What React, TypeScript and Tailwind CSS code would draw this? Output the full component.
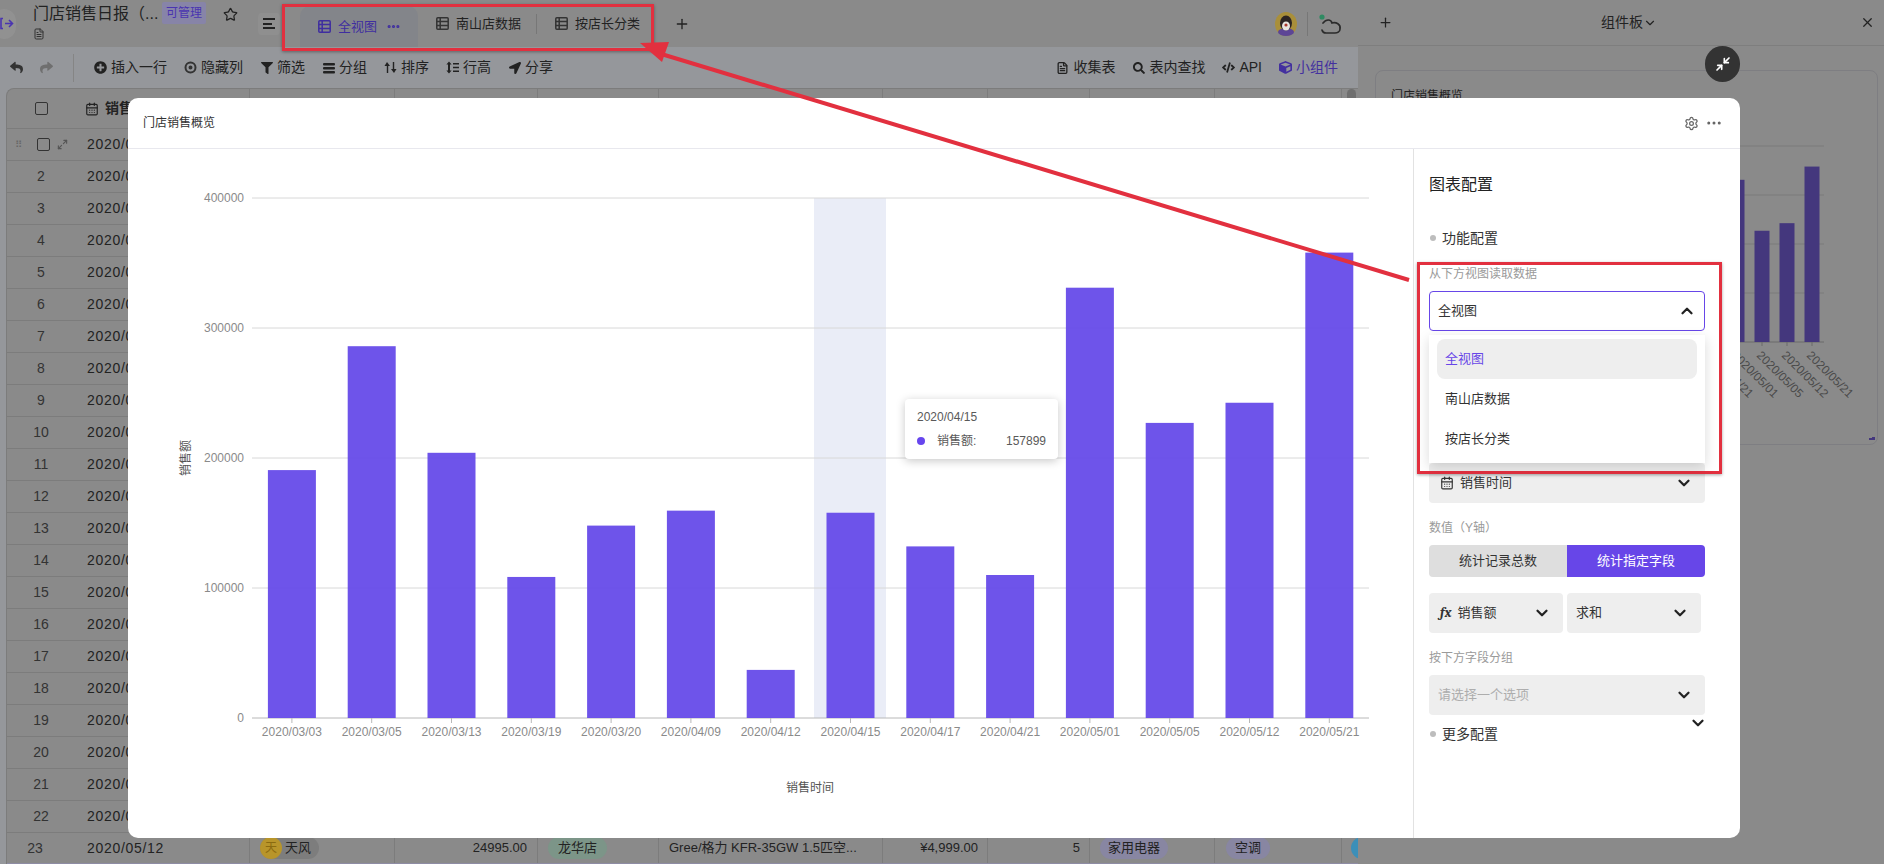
import { CalendarDays, ChevronDown, ChevronUp, FileText, Maximize2, Minimize2, MoreHorizontal, Plus, Settings, Star, X } from "lucide-react";
import { FaCode, FaCube, FaFilter, FaLocationArrow, FaPlusCircle, FaReply, FaSearch, FaShare } from "react-icons/fa";
import type { ReactNode } from "react";

const bars = [
  { date: "2020/03/03", value: 190700 },
  { date: "2020/03/05", value: 286000 },
  { date: "2020/03/13", value: 204000 },
  { date: "2020/03/19", value: 108500 },
  { date: "2020/03/20", value: 148000 },
  { date: "2020/04/09", value: 159500 },
  { date: "2020/04/12", value: 37000 },
  { date: "2020/04/15", value: 157899 },
  { date: "2020/04/17", value: 132000 },
  { date: "2020/04/21", value: 110000 },
  { date: "2020/05/01", value: 331000 },
  { date: "2020/05/05", value: 227000 },
  { date: "2020/05/12", value: 242500 },
  { date: "2020/05/21", value: 358000 },
];

const rowDates = [
  "2020/03/03", "2020/03/03", "2020/03/05", "2020/03/05", "2020/03/13", "2020/03/13", "2020/03/19", "2020/03/20",
  "2020/03/20", "2020/04/09", "2020/04/09", "2020/04/12", "2020/04/15", "2020/04/15", "2020/04/17", "2020/04/21",
  "2020/04/21", "2020/05/01", "2020/05/01", "2020/05/05", "2020/05/05", "2020/05/12",
];

const columnLines = [243, 145, 143, 121, 224, 105, 102, 125, 127];

const TableIcon = ({ color = "#333" }: { color?: string }) => (
  <svg width="13" height="13" viewBox="0 0 13 13" fill="none" stroke={color} strokeWidth="1.5">
    <rect x="0.8" y="0.8" width="11.4" height="11.4" rx="1" />
    <path d="M0.8 4.6H12.2M0.8 8.4H12.2M4.2 0.8V12.2" />
  </svg>
);

const ToolItem = ({ icon, label, color = "#222" }: { icon: ReactNode; label: string; color?: string }) => (
  <div className="flex items-center gap-[4px] text-[14px]" style={{ color }}>
    <span className="flex w-[13px] justify-center">{icon}</span>
    <span>{label}</span>
  </div>
);

const Select = ({ children, width = "w-[276px]" }: { children: ReactNode; width?: string }) => (
  <div className={`flex h-10 items-center justify-between rounded-[4px] bg-[#eeeeee] pl-[9px] pr-[12px] text-[13px] text-[#333] ${width}`}>
    <div className="flex items-center gap-[6px]">{children}</div>
    <ChevronDown size={18} strokeWidth={3} className="text-[#222]" />
  </div>
);

const Label = ({ children, className = "" }: { children: ReactNode; className?: string }) => (
  <div className={`h-4 text-[12px] leading-4 text-[#9a9a9a] ${className}`}>{children}</div>
);

const Section = ({ children, className = "" }: { children: ReactNode; className?: string }) => (
  <div className={`flex h-5 items-center gap-[6px] text-[14px] text-[#333] ${className}`}>
    <span className="ml-[1px] h-[6px] w-[6px] rounded-full bg-[#bdbdbd]" />
    {children}
  </div>
);

const TopBar = () => (
  <div className="flex h-[47px] items-center bg-[#8a8a8a] text-[#222]">
    <div className="-ml-[8px] flex h-[30px] w-[24px] shrink-0 items-center justify-end rounded-full bg-[#919191] pr-[2px]">
      <svg width="14" height="13" viewBox="0 0 14 13" fill="none" stroke="#4a34b0" strokeWidth="1.6">
        <path d="M3 1.5H1V11.5H3M5 6.5H12M9 3L12.5 6.5L9 10" />
      </svg>
    </div>
    <div className="ml-[17px] w-[129px] shrink-0 self-start">
      <div className="mt-[2px] text-[16px] leading-6">门店销售日报（...</div>
      <FileText size={12} className="mt-[2px] text-[#333]" />
    </div>
    <span className="-mt-[22px] flex h-[22px] w-[44px] shrink-0 items-center justify-center rounded-[2px] bg-[#8784a8] text-[12px] text-[#4a34b0]">可管理</span>
    <Star size={15} strokeWidth={2} className="-mt-[18px] ml-[17px] shrink-0" />
    <div className="ml-[20px] flex h-[22px] w-[22px] shrink-0 flex-col items-center justify-center gap-[2.5px] rounded-[4px] bg-[#8f8f8f]">
      <span className="h-[2px] w-[12px] bg-[#222]" />
      <span className="ml-[5px] h-[2px] w-[9px] self-start bg-[#222]" />
      <span className="h-[2px] w-[12px] bg-[#222]" />
    </div>
    <div className="ml-[20px] flex h-[41px] w-[118px] shrink-0 items-center self-end rounded-t-[10px] bg-[#83858a] pl-[18px] text-[13px] text-[#3f2ea0]">
      <TableIcon color="#3f2ea0" />
      <span className="ml-[7px]">全视图</span>
      <MoreHorizontal size={15} strokeWidth={3} className="ml-[9px]" />
    </div>
    <div className="flex w-[118px] shrink-0 items-center pl-[18px] text-[13px]">
      <TableIcon />
      <span className="ml-[7px]">南山店数据</span>
    </div>
    <div className="h-[20px] w-px shrink-0 bg-[#777]" />
    <div className="flex w-[122px] shrink-0 items-center pl-[18px] text-[13px]">
      <TableIcon />
      <span className="ml-[7px]">按店长分类</span>
    </div>
    <Plus size={16} strokeWidth={2} className="ml-[15px] shrink-0" />
    <div className="ml-auto mr-[14px] flex items-center">
      <svg width="22" height="24" viewBox="0 0 22 24">
        <ellipse cx="11" cy="12" rx="11" ry="12" fill="#a98f3a" />
        <ellipse cx="11" cy="20" rx="8" ry="4" fill="#5d4596" />
        <ellipse cx="11" cy="11" rx="6" ry="7.5" fill="#2c2422" />
        <ellipse cx="11" cy="14" rx="4" ry="4.5" fill="#e8e4df" />
        <circle cx="11" cy="13" r="1.6" fill="#a8382b" />
      </svg>
      <div className="mx-[10px] h-[24px] w-px bg-[#777]" />
      <svg width="26" height="26" viewBox="0 0 26 26" fill="none" stroke="#2b2b2b" strokeWidth="1.7" strokeLinecap="round">
        <circle cx="4" cy="6" r="2.6" fill="#2f8a62" stroke="none" />
        <path d="M5 12C8 8 13 8 14 12C18 11 23 13 22 18C22 21 19 22 17 22H8C6 22 4.5 21 4 19" />
      </svg>
    </div>
  </div>
);

const ToolBar = () => (
  <div className="flex h-[41px] items-center justify-between bg-[#95979b] pl-[10px] pr-[20px] text-[#222]">
    <div className="flex items-center">
      <FaReply size={13} className="text-[#333]" />
      <FaShare size={13} className="ml-[17px] text-[#6f6f6f]" />
      <div className="ml-[20px] mr-[20px] h-[28px] w-px bg-[#858585]" />
      <div className="flex items-center gap-[17px]">
        <ToolItem icon={<FaPlusCircle size={13} />} label="插入一行" />
        <ToolItem
          icon={
            <svg width="13" height="13" viewBox="0 0 13 13" fill="none" stroke="#333" strokeWidth="2">
              <circle cx="6.5" cy="6.5" r="5" />
              <circle cx="6.5" cy="6.5" r="1" />
            </svg>
          }
          label="隐藏列"
        />
        <ToolItem icon={<FaFilter size={12} />} label="筛选" />
        <ToolItem
          icon={
            <svg width="12" height="12" viewBox="0 0 12 12" fill="#222">
              <rect y="1" width="12" height="2.6" rx="1" />
              <rect y="5" width="12" height="2.6" rx="1" />
              <rect y="9" width="12" height="2.6" rx="1" />
            </svg>
          }
          label="分组"
        />
        <ToolItem
          icon={
            <svg width="13" height="13" viewBox="0 0 13 13" fill="#222">
              <path d="M3 1L6 5H4.2V12H2.8L2.8 5H0.5ZM8.8 1H10.2V8H12.5L10 12L7 8H8.8Z" />
            </svg>
          }
          label="排序"
        />
        <ToolItem
          icon={
            <svg width="13" height="13" viewBox="0 0 13 13" fill="#222">
              <path d="M3 0.5L5.6 3.5H4V9.5H5.6L3 12.5L0.4 9.5H2V3.5H0.4ZM7 2H13V3.6H7ZM7 5.7H13V7.3H7ZM7 9.4H13V11H7Z" />
            </svg>
          }
          label="行高"
        />
        <ToolItem icon={<FaLocationArrow size={12} />} label="分享" />
      </div>
    </div>
    <div className="flex items-center gap-[17px]">
      <ToolItem icon={<FileText size={14} strokeWidth={2.4} />} label="收集表" />
      <ToolItem icon={<FaSearch size={12} />} label="表内查找" />
      <ToolItem icon={<FaCode size={13} />} label="API" />
      <ToolItem icon={<FaCube size={13} />} label="小组件" color="#43309f" />
    </div>
  </div>
);

const Cell = ({ width, className = "", children }: { width: number; className?: string; children?: ReactNode }) => (
  <div className={`flex h-full shrink-0 items-center border-r border-[#7c7c7c] ${className}`} style={{ width }}>
    {children}
  </div>
);

const Table = () => (
  <div className="relative ml-[6px] flex-1 overflow-hidden rounded-tl-[8px] border-l border-t border-[#7c7c7c] bg-[#8a8a8a] text-[14px] text-[#222]">
    <div className="flex h-[40px] border-b border-[#7c7c7c]">
      <Cell width={columnLines[0]}>
        <span className="ml-[28px] h-[13px] w-[13px] rounded-[2px] border border-[#333]" />
        <CalendarDays size={14} className="ml-[37px]" />
        <span className="ml-[6px] font-bold">销售时间</span>
      </Cell>
      {columnLines.slice(1).map((w, i) => (
        <Cell key={i} width={w} />
      ))}
    </div>
    {rowDates.map((date, i) => (
      <div key={i} className="flex h-[32px] border-b border-[#7c7c7c]">
        <Cell width={columnLines[0]}>
          <div className="relative flex w-[80px] shrink-0 items-center justify-center">
            {i === 0 ? (
              <>
                <span className="absolute left-[8px] text-[10px] leading-none tracking-[1px] text-[#666]">⠿</span>
                <span className="ml-[-7px] h-[13px] w-[13px] rounded-[2px] border border-[#333]" />
                <Maximize2 size={11} strokeWidth={2.5} className="absolute left-[50px] text-[#555]" />
              </>
            ) : (
              <span className="-ml-[12px] text-[#333]">{i + 1}</span>
            )}
          </div>
          <span className="tracking-[0.7px]">{date}</span>
        </Cell>
        {columnLines.slice(1).map((w, j) => (
          <Cell key={j} width={w} />
        ))}
      </div>
    ))}
    <div className="flex h-[32px] border-b-2 border-[#8e8ca4]">
      <Cell width={columnLines[0]}>
        <span className="w-[68px] shrink-0 pr-[12px] text-center text-[#333]">23</span>
        <span className="ml-[12px] tracking-[0.7px]">2020/05/12</span>
      </Cell>
      <Cell width={columnLines[1]} className="pl-[10px]">
        <div className="flex h-[22px] items-center gap-[3px] rounded-full bg-[#7d7d7d] pr-[8px]">
          <span className="flex h-[22px] w-[22px] items-center justify-center rounded-full bg-[#b8952a] text-[12px] text-[#8a6a10]">天</span>
          <span className="text-[13px]">天风</span>
        </div>
      </Cell>
      <Cell width={columnLines[2]} className="justify-end pr-[10px] text-[13px]">24995.00</Cell>
      <Cell width={columnLines[3]} className="pl-[10px]">
        <span className="flex h-[22px] items-center rounded-full bg-[#7c9588] px-[10px] text-[13px]">龙华店</span>
      </Cell>
      <Cell width={columnLines[4]} className="pl-[10px] text-[13px]">Gree/格力 KFR-35GW 1.5匹空...</Cell>
      <Cell width={columnLines[5]} className="justify-end pr-[9px] text-[13px]">¥4,999.00</Cell>
      <Cell width={columnLines[6]} className="justify-end pr-[9px] text-[13px]">5</Cell>
      <Cell width={columnLines[7]} className="pl-[10px]">
        <span className="flex h-[22px] items-center rounded-full bg-[#8886a2] px-[8px] text-[13px]">家用电器</span>
      </Cell>
      <Cell width={columnLines[8]} className="pl-[11px]">
        <span className="flex h-[22px] items-center rounded-full bg-[#8886a2] px-[9px] text-[13px]">空调</span>
      </Cell>
      <div className="ml-[9px] h-[22px] w-[22px] shrink-0 self-center rounded-full bg-[#3c8fb8]" />
    </div>
    {/* scrollbar thumb */}
    <div className="absolute right-[2px] top-0 h-[30px] w-[9px] rounded-full bg-[#6f6f6f]" />
  </div>
);

// the small copy of the chart that peeks out behind the modal
const MiniChart = () => (
  <svg width="501" height="373" viewBox="1376 71 501 373" className="absolute left-0 top-0">
    {[146, 195, 244, 293].map((y) => (
      <line key={y} x1="1475" x2="1824" y1={y} y2={y} stroke="#7b7b7b" />
    ))}
    <line x1="1475" x2="1824" y1="342" y2="342" stroke="#6a6a6a" />
    {bars.map((b, i) => {
      const cx = 1487 + i * 25;
      const h = (b.value / 100000) * 49;
      return (
        <g key={b.date}>
          <rect x={cx - 7.5} y={342 - h} width="15" height={h} fill="#44377d" />
          <line x1={cx} x2={cx} y1="342" y2="346" stroke="#6a6a6a" />
          <text x={cx - 6} y="356" fontSize="12" fill="#4a4a4a" transform={`rotate(45 ${cx - 6} 356)`}>{b.date}</text>
        </g>
      );
    })}
    <path d="M1872 437H1875V440H1869V438H1872Z" fill="#44377d" />
  </svg>
);

const RightPanel = () => (
  <div className="flex flex-1 flex-col bg-[#8a8a8a] text-[#222]">
    <div className="relative flex h-[46px] shrink-0 items-center justify-center border-b border-[#7e7e7e] text-[14px]">
      <Plus size={15} className="absolute left-[20px]" />
      <span className="ml-[16px]">组件板</span>
      <ChevronDown size={14} />
      <X size={15} className="absolute right-[9px]" />
    </div>
    <div className="relative ml-[17px] mt-[24px] h-[375px] w-[503px] rounded-[8px] border border-[#7e7e82]">
      <div className="ml-[15px] mt-[16px] text-[12px] text-[#222]">门店销售概览</div>
      <MiniChart />
    </div>
  </div>
);

const Chart = () => (
  <svg width="1285" height="689" viewBox="128 149 1285 689" className="absolute left-0 top-0">
    <rect x="814" y="198" width="72" height="520" fill="#eaedf7" />
    {[0, 100000, 200000, 300000, 400000].map((v, i) => {
      const y = 718 - i * 130;
      return (
        <g key={v}>
          <line x1="252" x2="1369" y1={y} y2={y} stroke={i === 0 ? "#b8b8b8" : "#d8d8d8"} />
          <text x="244" y={y + 4} fontSize="12" fill="#8a8a8a" textAnchor="end">{v}</text>
        </g>
      );
    })}
    {bars.map((b, i) => {
      const cx = 252 + 79.8 * (i + 0.5);
      const h = (b.value / 100000) * 130;
      return (
        <g key={b.date}>
          <rect x={cx - 24} y={718 - h} width="48" height={h} fill="#6347e8" fillOpacity="0.93" />
          <line x1={cx} x2={cx} y1="718" y2="723" stroke="#b8b8b8" />
          <text x={cx} y="736" fontSize="12" fill="#8a8a8a" textAnchor="middle">{b.date}</text>
        </g>
      );
    })}
    <text x="810" y="792" fontSize="12" fill="#555" textAnchor="middle">销售时间</text>
    <text x="190" y="458" fontSize="12" fill="#555" textAnchor="middle" transform="rotate(-90 190 458)">销售额</text>
  </svg>
);

const ConfigPanel = () => (
  <div className="relative w-[327px] shrink-0 border-l border-[#e2e2e2] pl-[15px] pt-[24px]">
    <div className="h-6 text-[16px] leading-6 text-[#222]">图表配置</div>
    <Section className="mt-[31px]">功能配置</Section>
    <Label className="mt-[18px]">从下方视图读取数据</Label>
    <div className="relative mt-[9px] h-10 w-[276px]">
      <div className="flex h-10 items-center justify-between rounded-[4px] border border-[#6746e8] pl-[8px] pr-[8px] text-[13px] text-[#333]">
        全视图
        <ChevronUp size={18} strokeWidth={3} className="text-[#222]" />
      </div>
      <div className="absolute left-0 top-[44px] z-10 h-[128px] w-[276px] bg-white p-[4px_8px] text-[13px] text-[#333] shadow-[0_4px_12px_rgba(0,0,0,0.15)]">
        <div className="flex h-10 items-center rounded-[8px] bg-[#eeeeee] px-[8px] text-[#6746e8]">全视图</div>
        <div className="flex h-10 items-center px-[8px]">南山店数据</div>
        <div className="flex h-10 items-center px-[8px]">按店长分类</div>
      </div>
    </div>
    <div className="mt-[132px]">
      <Select>
        <CalendarDays size={14} className="ml-[2px]" />
        销售时间
      </Select>
    </div>
    <Label className="mt-[17px]">数值（Y轴）</Label>
    <div className="mt-[9px] flex h-8 w-[276px] overflow-hidden rounded-[4px] text-[13px]">
      <div className="flex flex-1 items-center justify-center bg-[#dedede] text-[#333]">统计记录总数</div>
      <div className="flex flex-1 items-center justify-center bg-[#6746e8] text-white">统计指定字段</div>
    </div>
    <div className="mt-[16px] flex w-[276px] gap-[4px]">
      <Select width="w-[134px]">
        <span className="ml-[2px] font-serif text-[14px] font-bold italic leading-none">fx</span>
        销售额
      </Select>
      <Select width="w-[134px]">求和</Select>
    </div>
    <Label className="mt-[17px]">按下方字段分组</Label>
    <div className="mt-[9px]">
      <Select>
        <span className="text-[#adadad]">请选择一个选项</span>
      </Select>
    </div>
    <ChevronDown size={18} strokeWidth={3} className="absolute left-[275px] top-[565px] text-[#222]" />
    <Section className="mt-[9px]">更多配置</Section>
  </div>
);

const Modal = () => (
  <div className="absolute left-[128px] top-[98px] flex h-[740px] w-[1612px] flex-col overflow-hidden rounded-[10px] bg-white">
    <div className="flex h-[51px] shrink-0 items-center justify-between border-b border-[#e8e8ee] pl-[15px] pr-[17px]">
      <span className="text-[12px] text-[#333]">门店销售概览</span>
      <div className="flex items-center gap-[6px] text-[#666]">
        <Settings size={15} />
        <MoreHorizontal size={18} />
      </div>
    </div>
    <div className="flex flex-1">
      <div className="relative flex-1">
        <Chart />
        <div className="absolute left-[777px] top-[250px] h-[60px] w-[153px] rounded-[4px] bg-white px-[12px] pt-[10px] text-[12px] leading-[16px] text-[#595959] shadow-[0_2px_10px_rgba(0,0,0,0.22)]">
          <div>2020/04/15</div>
          <div className="mt-[8px] flex items-center">
            <span className="h-2 w-2 rounded-full bg-[#6746ee]" />
            <span className="ml-[12px]">销售额:</span>
            <span className="ml-auto">157899</span>
          </div>
        </div>
      </div>
      <ConfigPanel />
    </div>
  </div>
);

const Annotations = () => (
  <>
    <div className="absolute left-[282px] top-[4px] h-[47px] w-[372px] border-[3px] border-[#e2303f] shadow-[0_1px_3px_rgba(0,0,0,0.35)]" />
    <div className="absolute left-[1417px] top-[262px] h-[212px] w-[305px] border-[3px] border-[#e2303f] shadow-[0_1px_3px_rgba(0,0,0,0.35)]" />
    <svg width="1884" height="864" viewBox="0 0 1884 864" className="pointer-events-none absolute left-0 top-0">
      <line x1="1409" y1="280" x2="658" y2="53" stroke="#e2303f" strokeWidth="4" />
      <polygon points="640,43 669,42 662,62" fill="#e2303f" />
    </svg>
  </>
);

export default function App() {
  return (
    <div className="relative flex h-[864px] w-[1884px] overflow-hidden bg-[#8a8a8a] [font-family:'Liberation_Sans','Noto_Sans_CJK_SC',sans-serif]">
      <div className="flex w-[1358px] shrink-0 flex-col overflow-hidden bg-[#95979b]">
        <TopBar />
        <ToolBar />
        <Table />
      </div>
      <RightPanel />
      <Modal />
      <div className="absolute left-[1705px] top-[46px] flex h-[36px] w-[35px] items-center justify-center rounded-full bg-[#333333]">
        <Minimize2 size={16} strokeWidth={2.5} className="text-white" />
      </div>
      <Annotations />
    </div>
  );
}
